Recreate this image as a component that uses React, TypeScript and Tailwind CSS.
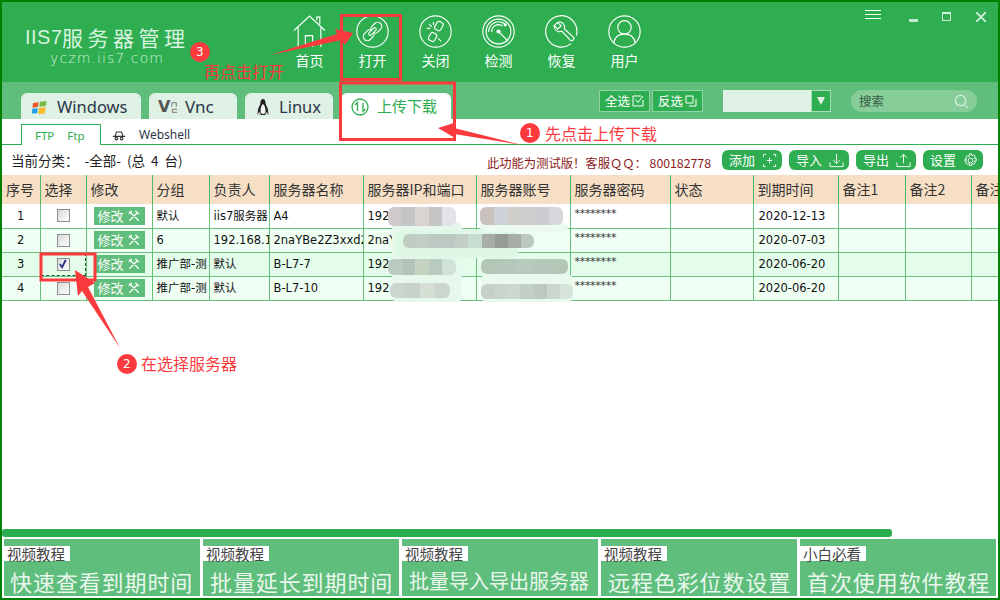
import { ReactNode } from "react";

const navItems = ["首页", "打开", "关闭", "检测", "恢复", "用户"];

const columns = [
  { title: "序号", width: "w-[38px]" },
  { title: "选择", width: "w-[46px]" },
  { title: "修改", width: "w-[66px]" },
  { title: "分组", width: "w-[57px]" },
  { title: "负责人", width: "w-[60px]" },
  { title: "服务器名称", width: "w-[94px]" },
  { title: "服务器IP和端口", width: "w-[113px]" },
  { title: "服务器账号", width: "w-[94px]" },
  { title: "服务器密码", width: "w-[100px]" },
  { title: "状态", width: "w-[83px]" },
  { title: "到期时间", width: "w-[85px]" },
  { title: "备注1", width: "w-[67px]" },
  { title: "备注2", width: "w-[66px]" },
  { title: "备注3", width: "w-[60px]" },
];

const rows = [
  { id: 1, group: "默认", owner: "iis7服务器", name: "A4", ip: "192", account: "", date: "2020-12-13", bg: "bg-white", checked: false },
  { id: 2, group: "6", owner: "192.168.1", name: "2naYBe2Z3xxd2", ip: "2naY", account: "", date: "2020-07-03", bg: "bg-[#f0fff4]", checked: false },
  { id: 3, group: "推广部-测", owner: "默认", name: "B-L7-7", ip: "192", account: "", date: "2020-06-20", bg: "bg-[#e4fdeb]", checked: true },
  { id: 4, group: "推广部-测", owner: "默认", name: "B-L7-10", ip: "192", account: "", date: "2020-06-20", bg: "bg-[#f0fff4]", checked: false },
];

const tutorials = [
  { tag: "视频教程", title: "快速查看到期时间", size: "text-[22px] tracking-[0.900px] pl-[6px]" },
  { tag: "视频教程", title: "批量延长到期时间", size: "text-[22px] tracking-[0.900px] pl-[7px]" },
  { tag: "视频教程", title: "批量导入导出服务器", size: "text-[20px] pl-[7px]" },
  { tag: "视频教程", title: "远程色彩位数设置", size: "text-[22px] tracking-[0.900px] pl-[7px]" },
  { tag: "小白必看", title: "首次使用软件教程", size: "text-[22px] tracking-[0.900px] pl-[7px]" },
];

const patches = [
  { pos: "left-[392px] top-[222px] w-[70px] h-[80px]", colors: ["#e6f8ec"] },
  { pos: "left-[396px] top-[230px] w-[122px] h-[28px]", colors: ["#dff8e6"] },
  { pos: "left-[480px] top-[222px] w-[88px] h-[10px]", colors: ["#eafaef"] },
  { pos: "left-[481px] top-[274px] w-[92px] h-[28px]", colors: ["#e9f9ee"] },
  { pos: "left-[388px] top-[207px] w-[68px] h-[19px]", colors: ["#cfc9c9", "#c4c4c7", "#d9d4d2", "#c6c5c3", "#e2e3e6"] },
  { pos: "left-[480px] top-[207px] w-[83px] h-[18px]", colors: ["#c9c1bd", "#cdd2d9", "#d1cfcc", "#d0cdcd", "#ccccd2", "#d7d7dc"] },
  { pos: "left-[403px] top-[234px] w-[131px] h-[14px]", colors: ["#bfcdc3", "#c1cdc5", "#bfc9c3", "#bcc8c2", "#c2cec6", "#c8dccf", "#a6aea6", "#949c94", "#a6aea6", "#bcc8c2"] },
  { pos: "left-[388px] top-[259px] w-[68px] h-[16px]", colors: ["#bccbc0", "#b2c4b9", "#c4d3bf", "#b9cabf", "#d0e2d6"] },
  { pos: "left-[481px] top-[259px] w-[87px] h-[15px]", colors: ["#b3c6b8", "#b5c7ba", "#b8cabd", "#b5c8bb", "#b3c6b8"] },
  { pos: "left-[390px] top-[283px] w-[60px] h-[15px]", colors: ["#cbd6ce", "#c6d2ca", "#d6dfd3", "#cbd6ce"] },
  { pos: "left-[481px] top-[284px] w-[92px] h-[15px]", colors: ["#c6d0c9", "#c9d5cc", "#cbd7cf", "#c2cfc7", "#bdc9bf", "#cbd6ce", "#d6e4da"] },
];

function CircleIcon({ children }: { children: ReactNode }) {
  return (
    <svg viewBox="0 0 32 32" className="w-[33px] h-[33px]" fill="none" stroke="white" strokeWidth="1.100" strokeLinecap="round">
      {children}
    </svg>
  );
}

function NavIcon({ index }: { index: number }) {
  if (index === 0)
    return (
      <svg viewBox="0 0 32 32" className="w-[33px] h-[33px]" fill="none" stroke="white" strokeWidth="1.100">
        <path d="M1 15 16 1l15 14M5 12v19M27 12v19M23 5V2h3v7M12 31V20h7v11" />
      </svg>
    );
  if (index === 1)
    return (
      <CircleIcon>
        <circle cx="16" cy="16" r="15.200" />
        <g transform="rotate(-45 16 16)">
          <rect x="5" y="12" width="11.500" height="8" rx="4" />
          <rect x="15.500" y="12" width="11.500" height="8" rx="4" />
          <rect x="11.500" y="14.500" width="9" height="3" rx="1.500" fill="#2eae50" />
        </g>
      </CircleIcon>
    );
  if (index === 2)
    return (
      <CircleIcon>
        <circle cx="16" cy="16" r="15.200" />
        <g transform="rotate(-60 16 16)">
          <rect x="6" y="13" width="8" height="6.500" rx="2" />
          <rect x="18" y="13" width="8.500" height="6.500" rx="2" />
        </g>
        <path d="M10 9l2 2M14 7v2.500M8 13h2.500M19 23l2 2" />
      </CircleIcon>
    );
  if (index === 3)
    return (
      <CircleIcon>
        <circle cx="16" cy="16" r="15.200" />
        <circle cx="16" cy="16" r="12" />
        <path d="M6.500 16A9.500 9.500 0 0 1 16 6.500c3 0 5 1 7 3M9.500 16a6.500 6.500 0 0 1 10-5.500" />
        <circle cx="16" cy="16" r="1.500" fill="white" />
        <circle cx="22.500" cy="9.500" r="1" fill="white" />
        <path d="M16 16l9 9" />
      </CircleIcon>
    );
  if (index === 4)
    return (
      <CircleIcon>
        <path d="M25 28A15.200 15.200 0 1 1 31 16c0 1.500-.2 2.500-.5 3.500" />
        <path d="M8.500 10.500l4-3.500c3-.8 6 1 6.500 4 .2 1-.1 1.700-.2 2.500l8.700 8c1 1 .5 2-.3 2.800-.8.800-1.700 1-2.700 0l-8-8.500c-1 .3-2 .6-3.200.3-2.800-.5-4.400-3-4.100-5.500l3 3 3.500-3-3.500-3.500" />
      </CircleIcon>
    );
  return (
    <CircleIcon>
      <circle cx="16" cy="16" r="15.200" />
      <circle cx="16" cy="12" r="6.500" />
      <path d="M5.500 27c1-5.500 5-8.500 10.500-8.500S25.500 21.500 26.500 27" />
    </CircleIcon>
  );
}

function TabLogo({ name }: { name: string }) {
  if (name === "Windows")
    return (
      <svg viewBox="0 0 16 16" className="w-[17px] h-[15px]">
        <path d="M1 3.500 7 2l-.6 5.500-6 .8z" fill="#f0572b" />
        <path d="M8.300 1.800 15.500 1l-.8 5.500-7 .8z" fill="#7cbb42" />
        <path d="M.2 9.300l6-.6L5.500 14l-5.500.5z" fill="#1ea1ea" />
        <path d="M7.300 8.600l7.200-.8-.9 6.500-6.900.7z" fill="#fbb928" />
      </svg>
    );
  if (name === "Vnc")
    return (
      <span className="flex items-center text-[#555] font-bold text-[16px] leading-none font-['DejaVu_Sans',sans-serif] w-[21px]">
        V
        <svg viewBox="0 0 8 14" className="w-[7px] h-[13px] ml-px" fill="none" stroke="#777" strokeWidth="1.100">
          <path d="M1 6V1.500h5V6M7 9H1.500v3.500H7" />
        </svg>
      </span>
    );
  return (
    <svg viewBox="0 0 14 18" className="w-[14px] h-[18px]">
      <path d="M7 1C4.500 1 4.500 4 4.300 6 3.500 8 1.500 11 1.800 14L1 17h12l-.8-3c.3-3-1.700-6-2.500-8C9.500 4 9.500 1 7 1z" fill="#222" />
      <path d="M7 6c-1.500 1-2.500 4-2.500 7 0 2 1 3 2.500 3s2.500-1 2.500-3c0-3-1-6-2.500-7z" fill="#f4f4f4" />
      <path d="M.8 15.500 4 14l1 3H1zM13.200 15.500 10 14l-1 3h4z" fill="#bbb" />
    </svg>
  );
}

function ToolIcon() {
  return (
    <svg viewBox="0 0 14 14" className="w-[12px] h-[12px]" fill="none" stroke="white" strokeWidth="1.500" strokeLinecap="round">
      <path d="M2 12 10 4M9 1.500l3.500 3M2 2l10 10M1.500 4 4 1.500" />
    </svg>
  );
}

function ActionIcon({ label }: { label: string }) {
  return (
    <svg viewBox="0 0 16 16" className="w-[15px] h-[15px]" fill="none" stroke="white" strokeWidth="1">
      {label === "添加" && <path d="M4 1.500H1.500V4M12 1.500h2.500V4M4 14.500H1.500V12M12 14.500h2.500V12M8 5v6M5 8h6" />}
      {label === "导入" && <path d="M8 1v10M4.500 7.500 8 11l3.500-3.500M1 10v4.500h14V10" />}
      {label === "导出" && <path d="M8 11V1.500M4.500 5 8 1.500 11.500 5M1 10v4.500h14V10" />}
      {label === "设置" && (
        <>
          <circle cx="8" cy="8" r="2.500" />
          <path d="M6.800 1h2.400l.4 2 1.700-1 1.800 1.700-1 1.800 2 .4v2.400l-2 .4 1 1.800-1.800 1.700-1.700-1-.4 2H6.800l-.4-2-1.700 1-1.800-1.700 1-1.800-2-.4V6.900l2-.4-1-1.800 1.800-1.700 1.700 1z" />
        </>
      )}
    </svg>
  );
}

function Checkbox({ checked }: { checked: boolean }) {
  return (
    <div className="mx-auto flex h-[13px] w-[13px] items-center justify-center border border-[#8f8f8f] bg-gradient-to-br from-[#d8d8d8] to-white">
      {checked && (
        <svg viewBox="0 0 11 11" className="w-[10px] h-[10px]" fill="none" stroke="#2b2b8c" strokeWidth="2">
          <path d="M2 5.500 4.500 9 8.500 1" />
        </svg>
      )}
    </div>
  );
}

export default function App() {
  return (
    <div className="relative flex h-[600px] w-[1000px] flex-col overflow-hidden border-2 border-[#008000] bg-white font-['Noto_Sans_CJK_SC',sans-serif]">
      {/* header */}
      <div className="flex h-[80px] shrink-0 bg-[#2eae50] text-white">
        <div className="ml-[23px] w-[253px] pt-[21px]">
          <div className="flex items-center text-[21px] leading-[28px] tracking-[4.500px] text-[#d8f3df] whitespace-nowrap">
            <span className="w-[37px] font-['Liberation_Sans',sans-serif] text-[20px] font-light tracking-[0.500px]">IIS7</span>
            服务器管理
          </div>
          <div className="ml-[25px] text-[14px] leading-[14px] tracking-[1.100px] text-[#cfeed8] font-['DejaVu_Sans',sans-serif] font-light">
            yczm.iis7.com
          </div>
        </div>
        <div className="flex">
          {navItems.map((item, i) => (
            <div key={item} className="flex w-[63px] flex-col items-center pt-[13px]">
              <NavIcon index={i} />
              <span className="mt-[3px] text-[14px] leading-[18px]">{item}</span>
            </div>
          ))}
        </div>
        <div className="ml-auto flex items-start pt-[8px]">
          <div className="flex w-[16px] flex-col gap-[3px]">
            <div className="h-px bg-white" />
            <div className="h-px bg-white" />
            <div className="h-px bg-white" />
          </div>
          <div className="ml-[28px] mt-[9px] h-[3px] w-[9px] bg-[#c4e8cd]" />
          <div className="ml-[24px] mt-[2px] h-[9px] w-[9px] border border-t-2 border-[#d4efdb]" />
          <svg viewBox="0 0 10 10" className="ml-[25px] mr-[12px] mt-[2px] h-[10px] w-[10px]" fill="none" stroke="#d4efdb" strokeWidth="1.800">
            <path d="M0 0l10 10M10 0 0 10" />
          </svg>
        </div>
      </div>

      {/* tab strip */}
      <div className="flex h-[37px] shrink-0 items-end bg-[#5fbe7c] pl-[19px]">
        <div className="flex h-[26px] w-[120px] items-center rounded-t-[6px] bg-[#dff1e4] pl-[10px] pt-[2px]">
          <TabLogo name="Windows" />
          <span className="ml-[9px] font-['Noto_Sans',sans-serif] text-[16.500px] text-[#2b3648]">Windows</span>
        </div>
        <div className="ml-[8px] flex h-[26px] w-[88px] items-center rounded-t-[6px] bg-[#dff1e4] pl-[9px] pt-[2px]">
          <TabLogo name="Vnc" />
          <span className="ml-[6px] font-['Noto_Sans',sans-serif] text-[17px] text-[#2b3648]">Vnc</span>
        </div>
        <div className="ml-[8px] flex h-[26px] w-[88px] items-center rounded-t-[6px] bg-[#dff1e4] pl-[11px] pt-[2px]">
          <TabLogo name="Linux" />
          <span className="ml-[9px] font-['Noto_Sans',sans-serif] text-[16.500px] text-[#2b3648]">Linux</span>
        </div>
        <div className="ml-[8px] flex h-[26px] w-[110px] items-center rounded-t-[6px] bg-white pl-[10px] pt-[1px] text-[#2eae50]">
          <svg viewBox="0 0 18 18" className="h-[18px] w-[18px]" fill="none" stroke="#2eae50" strokeWidth="1.300">
            <circle cx="9" cy="9" r="8" />
            <path d="M4 7l2.500-2.500V13M12 5v8.500L14.500 11" />
          </svg>
          <span className="ml-[8px] text-[15px]">上传下载</span>
        </div>
        <div className="mb-[7px] ml-[148px] flex h-[22px] gap-[2px] text-[12.500px] text-white">
          <div className="flex w-[51px] items-center justify-center gap-[2px] border border-[#8fd3a4] bg-[#2eae50]">
            全选
            <svg viewBox="0 0 12 12" className="h-[12px] w-[12px]" fill="none" stroke="white" strokeWidth="1">
              <path d="M11 5v6H1V1h8M3.500 4.500 6 7.500 11 1" />
            </svg>
          </div>
          <div className="flex w-[51px] items-center justify-center gap-[2px] border border-[#8fd3a4] bg-[#2eae50]">
            反选
            <svg viewBox="0 0 12 12" className="h-[12px] w-[12px]" fill="none" stroke="white" strokeWidth="1">
              <path d="M1 1h7v7H1zM4 11h7V4" />
            </svg>
          </div>
        </div>
        <div className="mb-[7px] ml-[20px] flex h-[22px] w-[108px]">
          <div className="flex-1 bg-[#dff1e4]" />
          <div className="flex w-[20px] items-center justify-center border border-[#a6dcb6] bg-[#2eae50]">
            <div className="h-0 w-0 border-x-[4px] border-t-[8px] border-x-transparent border-t-[#dff1e4]" />
          </div>
        </div>
        <div className="mb-[7px] ml-[20px] flex h-[22px] w-[126px] items-center justify-between rounded-full bg-[#86cd99] px-[8px]">
          <span className="text-[12.500px] text-[#3a5a44]">搜索</span>
          <svg viewBox="0 0 16 16" className="h-[15px] w-[15px]" fill="none" stroke="#d6efdc" strokeWidth="1.300">
            <circle cx="7" cy="7" r="5.500" />
            <path d="M11 11l4 4" />
          </svg>
        </div>
      </div>

      {/* sub tabs */}
      <div className="flex h-[26px] shrink-0 items-end border-b border-[#2eae50] pl-[19px]">
        <div className="relative top-px flex h-[21px] w-[80px] items-center gap-[13px] border border-b-0 border-[#2eae50] bg-white pl-[13px] pt-[2px] font-['Noto_Sans',sans-serif] text-[11.500px] text-[#2eae50]">
          <span>FTP</span>
          <span>Ftp</span>
        </div>
        <div className="flex h-[20px] items-center pl-[11px] pt-[2px] text-[12px] text-[#2b3648] font-['Noto_Sans',sans-serif]">
          <svg viewBox="0 0 16 12" className="h-[11px] w-[14px]" fill="none" stroke="#333" strokeWidth="1.200">
            <path d="M1 7h14M3.500 7 5 2h6l1.500 5" />
            <circle cx="5" cy="9.500" r="1.500" />
            <circle cx="11" cy="9.500" r="1.500" />
          </svg>
          <span className="ml-[13px]">Webshell</span>
        </div>
      </div>

      {/* info bar */}
      <div className="flex h-[30px] shrink-0 items-center pl-[9px]">
        <span className="pt-[1px] text-[13.500px] text-[#222] [word-spacing:3px]">当前分类： -全部- (总 4 台)</span>
        <span className="ml-auto mt-[6px] text-[12.300px] text-[#8b1a1a]">此功能为测试版！客服ＱＱ： 800182778</span>
        <div className="ml-[11px] mr-[15px] flex gap-[7px]">
          {["添加", "导入", "导出", "设置"].map((label) => (
            <div key={label} className="flex h-[20px] w-[60px] items-center justify-between rounded-[6px] bg-[#2eae50] pl-[7px] pr-[5px] text-[13px] text-white">
              {label}
              <ActionIcon label={label} />
            </div>
          ))}
        </div>
      </div>

      {/* table */}
      <div className="shrink-0 overflow-hidden">
        <table className="w-[1029px] table-fixed border-collapse font-['DejaVu_Sans','Noto_Sans_CJK_SC',sans-serif] text-[11.500px] text-[#111]">
          <thead>
            <tr className="h-[29px] bg-[#f6dfc5]">
              {columns.map((col) => (
                <th key={col.title} className={`${col.width} overflow-hidden whitespace-nowrap border-r border-[#4cbb69] pl-[4px] text-left text-[14px] font-normal text-[#333] font-['Noto_Sans_CJK_SC',sans-serif]`}>
                  {col.title}
                </th>
              ))}
            </tr>
          </thead>
          <tbody>
            {rows.map((row) => (
              <tr key={row.id} className={`h-[24px] border-b border-[#68c17f] ${row.bg}`}>
                <td className="border-r border-[#68c17f] pt-[1px] text-center">{row.id}</td>
                <td className="relative border-r border-[#68c17f]">
                  <Checkbox checked={row.checked} />
                  {row.checked && <div className="absolute inset-0 border-b border-r border-dashed border-[#1f5a33]" />}
                </td>
                <td className="border-r border-[#68c17f] pl-[7px]">
                  <div className="flex h-[18px] w-[51px] items-center justify-between bg-[#5fbe7c] pl-[4px] pr-[5px] text-[13px] text-white font-['Noto_Sans_CJK_SC',sans-serif]">
                    修改
                    <ToolIcon />
                  </div>
                </td>
                <td className="overflow-hidden whitespace-nowrap border-r border-[#68c17f] pl-[4px] pt-[1px]">{row.group}</td>
                <td className="overflow-hidden whitespace-nowrap border-r border-[#68c17f] pl-[4px] pt-[1px]">{row.owner}</td>
                <td className="overflow-hidden whitespace-nowrap border-r border-[#68c17f] pl-[4px] pt-[1px]">{row.name}</td>
                <td className="overflow-hidden whitespace-nowrap border-r border-[#68c17f] pl-[4px] pt-[1px]">{row.ip}</td>
                <td className="border-r border-[#68c17f] pl-[4px]">{row.account}</td>
                <td className="border-r border-[#68c17f] pl-[4px] pb-[3px] text-[11px] tracking-[-0.300px] text-[#333]">********</td>
                <td className="border-r border-[#68c17f]" />
                <td className="border-r border-[#68c17f] pl-[5px] pt-[1px]">{row.date}</td>
                <td className="border-r border-[#68c17f]" />
                <td className="border-r border-[#68c17f]" />
                <td />
              </tr>
            ))}
          </tbody>
        </table>
      </div>

      {/* tutorial links */}
      <div className="mt-auto shrink-0">
        <div className="h-[8px] w-[890px] rounded-[3px] bg-[#2aae50]" />
        <div className="mt-[2px] flex gap-[3px] pb-[2px] pl-[2px]">
          {tutorials.map((item) => (
            <div key={item.title} className="h-[57px] w-[196px] overflow-hidden bg-[#5fbe7c] pt-[7px]">
              <div className="h-[15px] w-[66px] bg-white pl-[3px] text-[14.500px] leading-[15px] text-[#444]">{item.tag}</div>
              <div className={`mt-[6px] whitespace-nowrap leading-[28px] text-[#e9f7ed] ${item.size}`}>{item.title}</div>
            </div>
          ))}
        </div>
      </div>

      {/* mosaic over the private columns */}
      {patches.map((patch) => (
        <div key={patch.pos} className={`absolute flex overflow-hidden rounded-[6px] -translate-x-[2px] -translate-y-[2px] ${patch.pos}`}>
          {patch.colors.map((color, i) => (
            <div key={i} className="flex-1" style={{ backgroundColor: color }} />
          ))}
        </div>
      ))}

      {/* tutorial annotations */}
      <svg viewBox="0 0 1000 600" className="pointer-events-none absolute -left-[2px] -top-[2px] h-[600px] w-[1000px]" fill="none">
        <rect x="341.500" y="15.500" width="59" height="64" stroke="#fb3a3e" strokeWidth="3" />
        <rect x="340.500" y="83" width="114" height="56.500" stroke="#fb3a3e" strokeWidth="3" />
        <rect x="41" y="254" width="54" height="26" stroke="#fb3a3e" strokeWidth="3" />
        <path d="M270 55 337 34 335 29 353 33 345 45 342 40z" fill="#fb3a3e" />
        <path d="M438 128 454 123 454 128 522 145 454 134 455 138z" fill="#fb3a3e" />
        <path d="M75 270 95 283 88 287 120 348 82 291 78 296z" fill="#fb3a3e" />
        <circle cx="530" cy="133" r="10" fill="#fb3a3e" />
        <circle cx="127" cy="364" r="10" fill="#fb3a3e" />
        <circle cx="200" cy="52" r="10" fill="#fb3a3e" />
      </svg>
      <span className="absolute left-[524px] top-[121px] text-[12px] leading-[20px] text-white font-['DejaVu_Sans',sans-serif]">1</span>
      <span className="absolute left-[121px] top-[352px] text-[12px] leading-[20px] text-white font-['DejaVu_Sans',sans-serif]">2</span>
      <span className="absolute left-[194px] top-[40px] text-[12px] leading-[20px] text-white font-['DejaVu_Sans',sans-serif]">3</span>
      <span className="absolute left-[543px] top-[121px] text-[16px] leading-[20px] text-[#fb3a3e]">先点击上传下载</span>
      <span className="absolute left-[139px] top-[351px] text-[16px] leading-[20px] text-[#fb3a3e]">在选择服务器</span>
      <span className="absolute left-[202px] top-[59px] text-[16px] leading-[20px] text-[#fb3a3e]">再点击打开</span>
    </div>
  );
}
